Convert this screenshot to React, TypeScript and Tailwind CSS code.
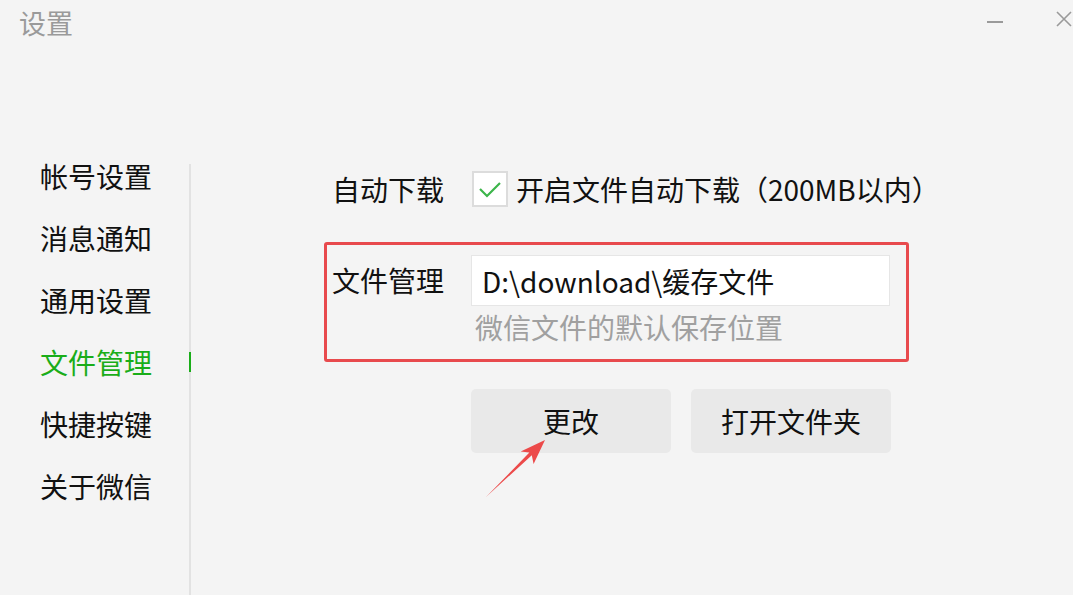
const menu = ['帐号设置', '消息通知', '通用设置', '文件管理', '快捷按键', '关于微信'];

export default function App() {
  const active = '文件管理';
  return (
    <div
      className="relative h-[595px] w-[1073px] overflow-hidden bg-[#f4f4f4] text-[#111]"
      style={{ fontFamily: '"Noto Sans CJK SC", "Noto Sans", sans-serif' }}
    >
      {/* title bar */}
      <div className="flex h-[50px] items-start justify-between">
        <div className="ml-[19px] mt-[4px] text-[27px] leading-[38px] text-[#9a9a9a]">设置</div>
        <div className="flex items-center">
          <svg width="16" height="4" viewBox="0 0 16 4" className="mt-[17px]">
            <line x1="0" y1="2" x2="16" y2="2" stroke="#9a9a9a" strokeWidth="2" />
          </svg>
          <svg width="16" height="16" viewBox="0 0 16 16" className="ml-[53px] mr-[1px] mt-[11px]">
            <path d="M1 1 L15 15 M15 1 L1 15" stroke="#9a9a9a" strokeWidth="1.6" />
          </svg>
        </div>
      </div>

      {/* body */}
      <div className="flex h-[545px]">
        <div className="mt-[114px] flex w-[191px] flex-col border-r-2 border-[#e2e2e2] pl-[40px]">
          <div className="-mt-[2px] flex flex-col gap-[34px]">
            {menu.map((m) => (
              <div
                key={m}
                className={`relative h-[28px] text-[28px] leading-[28px] ${m === active ? 'text-[#1aad19]' : 'text-[#111]'}`}
              >
                {m}
                {m === active && <span className="absolute right-[-2px] top-[4px] h-[20px] w-[2px] bg-[#1aad19]" />}
              </div>
            ))}
          </div>
        </div>

        <div className="ml-[133px] mt-[121px] flex flex-col">
          <div className="ml-[8px] flex h-[36px] items-center text-[28px]">
            <span className="w-[140px]">自动下载</span>
            <span className="flex h-[36px] w-[36px] items-center justify-center border-2 border-[#dcdcdc] bg-white">
              <svg width="24" height="18" viewBox="0 0 24 18">
                <path d="M2 9 L9 16 L22 3" fill="none" stroke="#3cb54a" strokeWidth="2.2" />
              </svg>
            </span>
            <span className="ml-[8px]">开启文件自动下载（200MB以内）</span>
          </div>

          <div className="mt-[35px] h-[120px] w-[585px] rounded-[3px] border-[3px] border-[#e84a4d] pl-[5px] pt-[10px]">
            <div className="flex items-center">
              <span className="w-[139px] text-[28px] leading-[51px]">文件管理</span>
              <div className="flex h-[51px] w-[419px] items-center border border-[#e6e6e6] bg-white pl-[10px] text-[28px]">
                D:\download\缓存文件
              </div>
            </div>
            <div className="ml-[143px] mt-[6px] text-[28px] leading-[30px] text-[#a0a0a0]">微信文件的默认保存位置</div>
          </div>

          <div className="ml-[147px] mt-[27px] flex gap-[20px]">
            <button className="h-[64px] w-[200px] rounded-[5px] bg-[#e9e9e9] text-[28px] text-[#111]">更改</button>
            <button className="h-[64px] w-[200px] rounded-[5px] bg-[#e9e9e9] text-[28px] text-[#111]">打开文件夹</button>
          </div>
        </div>
      </div>

      {/* annotation arrow */}
      <svg className="pointer-events-none absolute left-0 top-0" width="1073" height="595">
        <polygon
          points="486,497 531.8,455.2 533.6,464.1 545,440 520.7,451.4 529.4,452.6"
          fill="#ec4a4a"
        />
      </svg>
    </div>
  );
}
